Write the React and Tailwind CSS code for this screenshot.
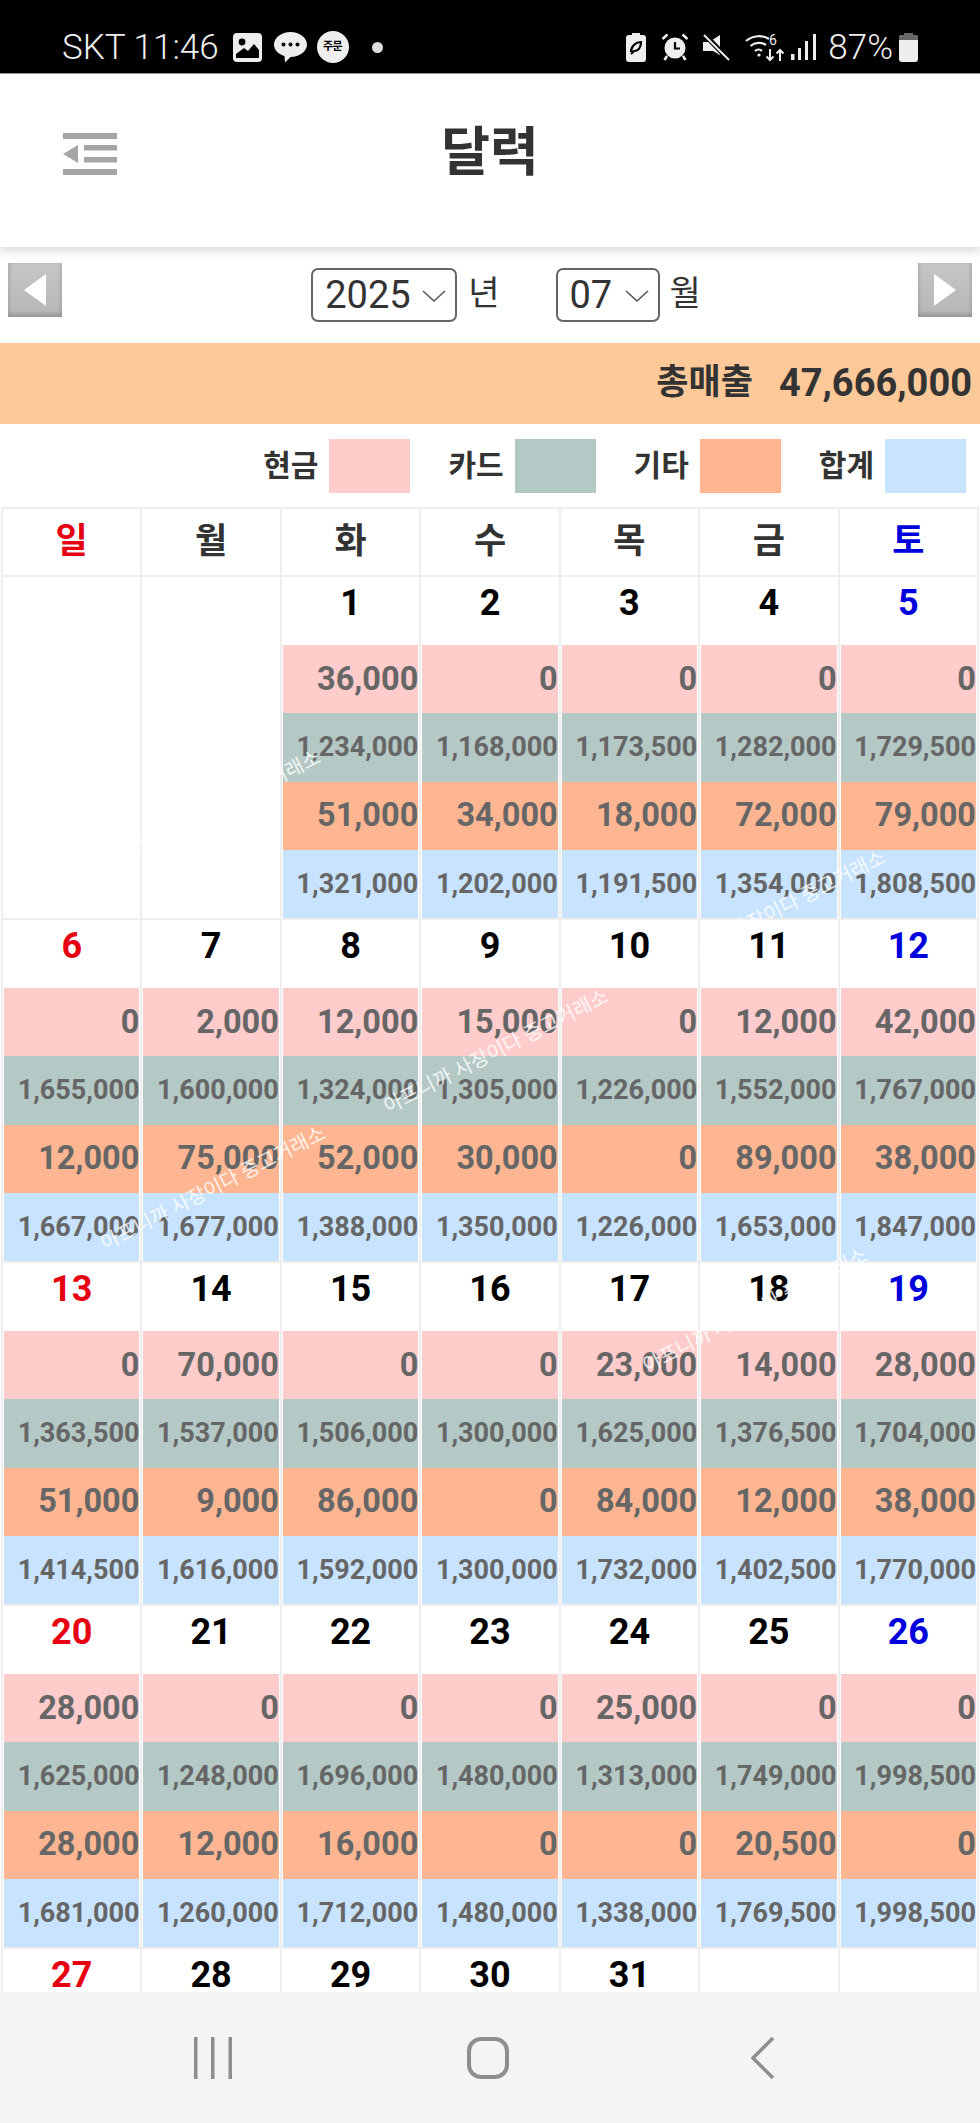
const NUM = "flex h-[68.25px] items-center justify-end border-x border-white font-bold text-[#666]";
const WEEKS = [
  { days: ["", "", "1", "2", "3", "4", "5"],
    cash: [null, null, "36,000", "0", "0", "0", "0"],
    card: [null, null, "1,234,000", "1,168,000", "1,173,500", "1,282,000", "1,729,500"],
    other: [null, null, "51,000", "34,000", "18,000", "72,000", "79,000"],
    total: [null, null, "1,321,000", "1,202,000", "1,191,500", "1,354,000", "1,808,500"] },
  { days: ["6", "7", "8", "9", "10", "11", "12"],
    cash: ["0", "2,000", "12,000", "15,000", "0", "12,000", "42,000"],
    card: ["1,655,000", "1,600,000", "1,324,000", "1,305,000", "1,226,000", "1,552,000", "1,767,000"],
    other: ["12,000", "75,000", "52,000", "30,000", "0", "89,000", "38,000"],
    total: ["1,667,000", "1,677,000", "1,388,000", "1,350,000", "1,226,000", "1,653,000", "1,847,000"] },
  { days: ["13", "14", "15", "16", "17", "18", "19"],
    cash: ["0", "70,000", "0", "0", "23,000", "14,000", "28,000"],
    card: ["1,363,500", "1,537,000", "1,506,000", "1,300,000", "1,625,000", "1,376,500", "1,704,000"],
    other: ["51,000", "9,000", "86,000", "0", "84,000", "12,000", "38,000"],
    total: ["1,414,500", "1,616,000", "1,592,000", "1,300,000", "1,732,000", "1,402,500", "1,770,000"] },
  { days: ["20", "21", "22", "23", "24", "25", "26"],
    cash: ["28,000", "0", "0", "0", "25,000", "0", "0"],
    card: ["1,625,000", "1,248,000", "1,696,000", "1,480,000", "1,313,000", "1,749,000", "1,998,500"],
    other: ["28,000", "12,000", "16,000", "0", "0", "20,500", "0"],
    total: ["1,681,000", "1,260,000", "1,712,000", "1,480,000", "1,338,000", "1,769,500", "1,998,500"] },
  { days: ["27", "28", "29", "30", "31", "", ""], cash: [], card: [], other: [], total: [] },
];
const HEAD = ["일", "월", "화", "수", "목", "금", "토"];
const tone = (i) => (i === 0 ? "text-[#e60012]" : i === 6 ? "text-[#0000dc]" : "text-black");
const headTone = (i) => (i === 0 ? "text-[#e60012]" : i === 6 ? "text-[#0000dc]" : "text-[#333]");

function Watermark({ className }) {
  return (
    <span className={"absolute -translate-x-1/2 -translate-y-1/2 -rotate-[27deg] whitespace-nowrap text-[20px] text-white/80 " + className}>
      아프니까 사장이다 중고거래소
    </span>
  );
}

function PageButton({ dir }) {
  return (
    <button className="flex h-[54px] w-[54px] items-center justify-center bg-gradient-to-b from-[#c6c6c6] to-[#b6b6b6] shadow-[inset_0_-4px_3px_rgba(0,0,0,0.12),inset_3px_0_3px_rgba(0,0,0,0.05),inset_-3px_0_3px_rgba(0,0,0,0.05)]">
      <svg width="22" height="32" viewBox="0 0 22 32">
        <path d={dir === "l" ? "M22 0V32L0 16Z" : "M0 0V32L22 16Z"} fill="#fff" />
      </svg>
    </button>
  );
}

function Select({ value, width, pad }) {
  return (
    <div className={"flex h-[54px] items-center rounded-[7px] border-2 border-[#666] pl-[12px] text-[38px] text-[#333] " + width}>
      <span className={pad}>{value}</span>
      <svg width="24" height="14" viewBox="0 0 24 14" className="mt-[1px]">
        <path d="M1 2L12 12L23 2" fill="none" stroke="#555" strokeWidth="1.6" />
      </svg>
    </div>
  );
}

function Legend({ label, color }) {
  return (
    <div className="flex items-center gap-[11px]">
      <span className="text-[30px] font-bold text-[#333]">{label}</span>
      <span className={"h-[54px] w-[81px] " + color} />
    </div>
  );
}

function DayCell({ week, i }) {
  const hasData = week.cash[i] != null;
  return (
    <div className="bg-white">
      <div className={"h-[68px] text-center text-[36px] font-bold leading-[52px] " + tone(i)}>{week.days[i]}</div>
      {hasData && (
        <>
          <div className={NUM + " bg-[#ffcccc] text-[32.5px]"}>{week.cash[i]}</div>
          <div className={NUM + " bg-[#b4c8c5] text-[27px]"}>{week.card[i]}</div>
          <div className={NUM + " bg-[#fdb691] text-[32.5px]"}>{week.other[i]}</div>
          <div className={NUM + " bg-[#c7e3fe] text-[27px]"}>{week.total[i]}</div>
        </>
      )}
    </div>
  );
}

function StatusBar() {
  return (
    <div className="flex h-[74px] shrink-0 items-center border-b border-[#999] bg-black pl-[62px] pr-[62px] pt-[21px] text-[#eee]">
      <span className="text-[35px] font-light leading-none">SKT 11:46</span>
      <svg width="29" height="29" viewBox="0 0 29 29" className="ml-[14px]">
        <rect width="29" height="29" rx="4" fill="#eee" />
        <circle cx="9" cy="9" r="3.4" fill="#000" />
        <path d="M3 25V21L11 15L15 18L21 11L26 17V25Z" fill="#000" />
      </svg>
      <svg width="33" height="32" viewBox="0 0 33 32" className="ml-[12px]">
        <path d="M16.500 1C25.500 1 33 6.800 33 13.500S25.500 26 16.500 26L11 31.500L10.500 25C4 23 0 18.800 0 13.500C0 6.800 7.500 1 16.500 1Z" fill="#eee" />
        <circle cx="9.500" cy="13.500" r="2" fill="#000" />
        <circle cx="16.500" cy="13.500" r="2" fill="#000" />
        <circle cx="23.500" cy="13.500" r="2" fill="#000" />
      </svg>
      <span className="ml-[10px] flex h-[32px] w-[32px] items-center justify-center rounded-full bg-[#eee] text-[11px] font-bold tracking-[-0.5px] text-black">주문</span>
      <span className="ml-[23px] h-[11px] w-[11px] rounded-full bg-[#ddd]" />
      <div className="flex-1" />
      <svg width="20" height="29" viewBox="0 0 20 29">
        <path d="M6 0H14V2H17Q20 2 20 5V26Q20 29 17 29H3Q0 29 0 26V5Q0 2 3 2H6Z" fill="#eee" />
        <path d="M5 19C5 13 10 9 15 9C15 15 12 18 8 18L5 21" fill="none" stroke="#000" strokeWidth="2.2" />
      </svg>
      <svg width="28" height="28" viewBox="0 0 28 28" className="ml-[15px]">
        <circle cx="14" cy="15" r="10.500" fill="#eee" />
        <path d="M14 9V15.500H19" fill="none" stroke="#000" strokeWidth="2.2" />
        <path d="M1.500 6L6.500 1.500M26.500 6L21.500 1.500" stroke="#eee" strokeWidth="2.4" />
        <path d="M6 23L3.500 27M22 23L24.500 27" stroke="#eee" strokeWidth="2.6" />
      </svg>
      <svg width="27" height="27" viewBox="0 0 27 27" className="ml-[14px]">
        <path d="M0 8H6L17 1V21L10 17H0Z" fill="#eee" />
        <path d="M3 2L25 25" stroke="#000" strokeWidth="5" />
        <path d="M1 1L26 26" stroke="#eee" strokeWidth="2" />
      </svg>
      <svg width="40" height="30" viewBox="0 0 40 30" className="ml-[15px]" fill="none" stroke="#eee">
        <path d="M1 9C8 3 18 3 24 7" strokeWidth="2.2" />
        <path d="M5.500 14C10 10 17 10 21 13" strokeWidth="2.2" />
        <path d="M10 19C12 17 15 17 17 19" strokeWidth="2.2" />
        <circle cx="14" cy="23" r="1.600" fill="#eee" stroke="none" />
        <text x="24" y="13" fontSize="14" fontFamily="Roboto" fill="#eee" stroke="none">6</text>
        <path d="M25 17V28M21.500 24.500L25 28L28.500 24.500M35 29V18M31.500 21.500L35 18L38.500 21.500" strokeWidth="2" />
      </svg>
      <svg width="25" height="27" viewBox="0 0 25 27" className="ml-[6px]" fill="#eee">
        <rect x="0" y="20" width="3.500" height="6" />
        <rect x="7" y="14" width="3" height="12" />
        <rect x="14" y="7" width="3" height="19" />
        <rect x="22" y="0" width="3" height="26" />
      </svg>
      <span className="ml-[12px] text-[35px] font-light leading-none">87%</span>
      <svg width="19" height="29" viewBox="0 0 19 29" className="ml-[6px]">
        <path d="M5 0H14V2H16Q19 2 19 5V26Q19 29 16 29H3Q0 29 0 26V5Q0 2 3 2H5Z" fill="#eee" />
        <path d="M5 0H14V2H16Q19 2 19 5V7H0V5Q0 2 3 2H5Z" fill="#666" />
      </svg>
    </div>
  );
}

export default function App() {
  return (
    <div className="relative flex h-[2123px] w-[980px] flex-col overflow-hidden bg-white [font-family:Roboto,'Noto_Sans_CJK_KR',sans-serif]">
      <StatusBar />
      <header className="relative z-10 flex h-[173px] shrink-0 items-center justify-center bg-white shadow-[0_3px_10px_rgba(0,0,0,0.18)]">
        <svg width="54" height="42" viewBox="0 0 54 42" className="absolute left-[63px] top-[59px]" fill="#a5a5a5">
          <rect width="54" height="6" />
          <rect x="21" y="12" width="33" height="5.500" />
          <rect x="21" y="24" width="33" height="5.500" />
          <rect y="36" width="54" height="6" />
          <path d="M15 12V30L0 21Z" />
        </svg>
        <h1 className="mb-[14px] text-[53px] font-bold text-[#333]">달력</h1>
      </header>

      <div className="flex h-[96px] shrink-0 items-start justify-between px-[8px] pt-[16px]">
        <PageButton dir="l" />
        <div className="ml-[32px] mt-[5px] flex items-center text-[34px] text-[#333]">
          <Select value="2025" width="w-[146px]" pad="mr-[11px]" />
          <span className="ml-[11px] mb-[3px]">년</span>
          <span className="w-[56px]" />
          <Select value="07" width="w-[104px]" pad="mr-[13px]" />
          <span className="ml-[10px] mb-[3px]">월</span>
        </div>
        <PageButton dir="r" />
      </div>

      <div className="flex h-[81px] shrink-0 items-center justify-end gap-[26px] bg-[#fdc999] pr-[8px] font-bold text-[#333]">
        <span className="text-[35px]">총매출</span>
        <span className="text-[38px]">47,666,000</span>
      </div>

      <div className="flex h-[83px] shrink-0 items-center justify-end gap-[38px] pr-[14px]">
        <Legend label="현금" color="bg-[#ffcccc]" />
        <Legend label="카드" color="bg-[#b4c8c5]" />
        <Legend label="기타" color="bg-[#fdb691]" />
        <Legend label="합계" color="bg-[#c7e3fe]" />
      </div>

      <div className="min-h-0 flex-1 overflow-hidden">
        <div className="mx-px grid grid-cols-7 gap-[2px] bg-[#eeeeee] p-[2px]">
          {HEAD.map((d, i) => (
            <div key={d} className={"flex h-[66px] items-center justify-center bg-white text-[35px] font-bold " + headTone(i)}>{d}</div>
          ))}
          {WEEKS.map((w, wi) => w.days.map((_, i) => <DayCell key={wi + "-" + i} week={w} i={i} />))}
        </div>
      </div>

      <nav className="flex h-[131px] shrink-0 items-center justify-center bg-[#f4f4f6] pr-[5px]">
        <div className="flex w-[275px] justify-center">
          <svg width="38" height="42" viewBox="0 0 38 42" fill="#8e8e8e">
            <rect x="0" width="3.500" height="42" />
            <rect x="17" width="3.500" height="42" />
            <rect x="34.500" width="3.500" height="42" />
          </svg>
        </div>
        <div className="flex w-[275px] justify-center">
          <svg width="42" height="42" viewBox="0 0 42 42">
            <rect x="2" y="2" width="38" height="38" rx="12" fill="none" stroke="#8e8e8e" strokeWidth="4" />
          </svg>
        </div>
        <div className="flex w-[275px] justify-center">
          <svg width="24" height="42" viewBox="0 0 24 42">
            <path d="M22 1L2 21L22 41" fill="none" stroke="#8e8e8e" strokeWidth="3.500" />
          </svg>
        </div>
      </nav>

      <Watermark className="left-[208px] top-[812px]" />
      <Watermark className="left-[773px] top-[912px]" />
      <Watermark className="left-[496px] top-[1051px]" />
      <Watermark className="left-[213px] top-[1188px]" />
      <Watermark className="left-[755px] top-[1310px]" />
    </div>
  );
}
